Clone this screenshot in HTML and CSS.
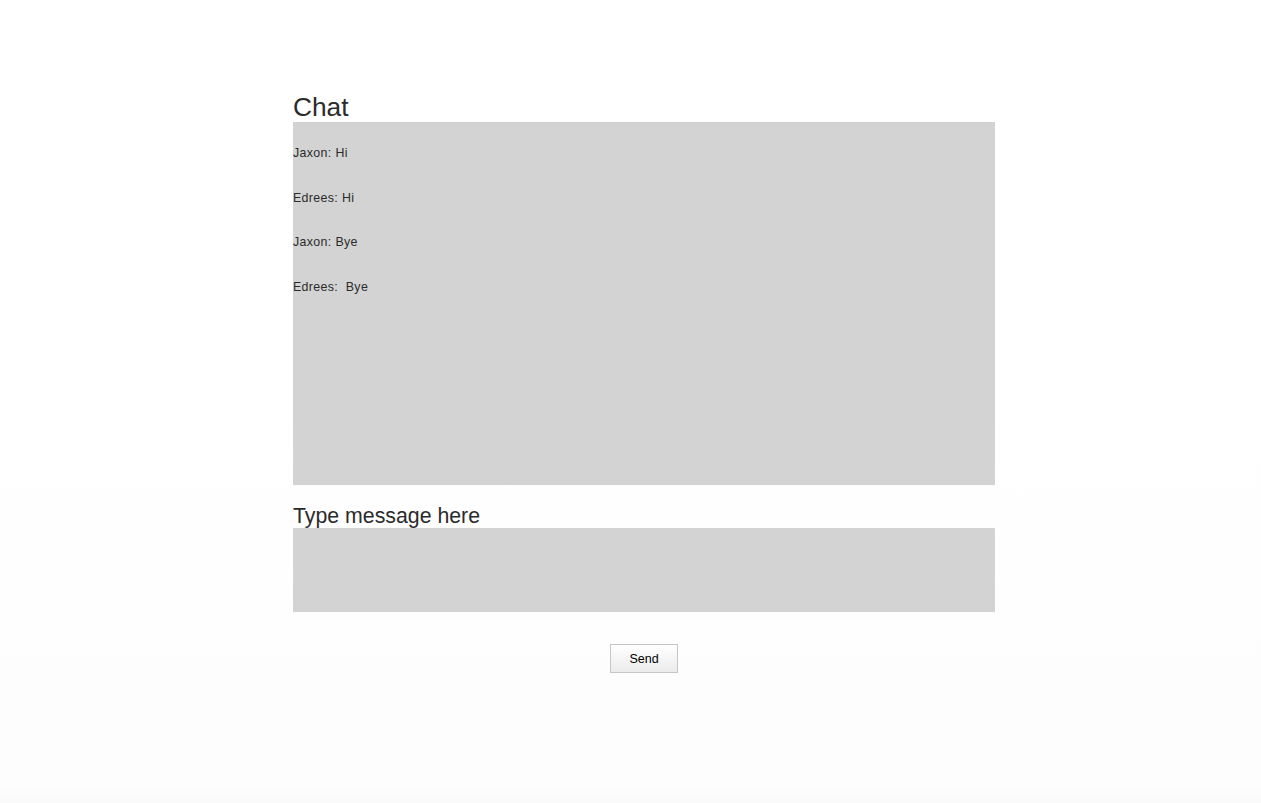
FILE: index.html
```html
<!DOCTYPE html>
<html lang="en">
<head>
<meta charset="utf-8">
<title>Chat</title>
<link rel="stylesheet" href="styles.css">
</head>
<body>
<main class="page">
  <section class="chat">
    <h1 class="title">Chat</h1>
    <div class="log">
      <p class="msg">Jaxon: Hi</p>
      <p class="msg">Edrees: Hi</p>
      <p class="msg">Jaxon: Bye</p>
      <p class="msg">Edrees:&nbsp; Bye</p>
    </div>
    <label class="label" for="msg">Type message here</label>
    <textarea id="msg" class="input"></textarea>
    <div class="actions">
      <button class="send" type="button">Send</button>
    </div>
  </section>
</main>
</body>
</html>
```
FILE: styles.css
```css
html, body {
  margin: 0;
  padding: 0;
  height: 100%;
}
body {
  background: linear-gradient(#ffffff 0%, #ffffff 40%, #fefefe 70%, #fdfdfd 98%, #f9f9f9 100%);
  font-family: "Liberation Sans", Arial, sans-serif;
  color: #2b2b2b;
}
.page {
  padding: 92px 0 0 293px;
}
.chat {
  width: 702px;
  display: flex;
  flex-direction: column;
}
.title {
  margin: 0;
  font-size: 26.3px;
  font-weight: normal;
  line-height: 30px;
}
.log {
  height: 363px;
  box-sizing: border-box;
  background: #d3d3d3;
  padding-top: 24px;
  display: flex;
  flex-direction: column;
  gap: 30px;
}
.msg {
  margin: 0;
  font-size: 12.4px;
  letter-spacing: 0.35px;
  line-height: 14.7px;
}
.label {
  margin-top: 19px;
  font-size: 21.3px;
  line-height: 24px;
}
.input {
  display: block;
  height: 84px;
  width: 100%;
  box-sizing: border-box;
  margin: 0;
  border: none;
  background: #d3d3d3;
  resize: none;
  outline: none;
}
.actions {
  display: flex;
  justify-content: center;
  margin-top: 32px;
}
.send {
  width: 68px;
  height: 29px;
  box-sizing: border-box;
  border: 1px solid #c6c6c6;
  background: linear-gradient(#ffffff, #ebebeb);
  font-family: "Liberation Sans", Arial, sans-serif;
  font-size: 12.5px;
  color: #000;
  padding: 0;
  border-radius: 0;
}
```
